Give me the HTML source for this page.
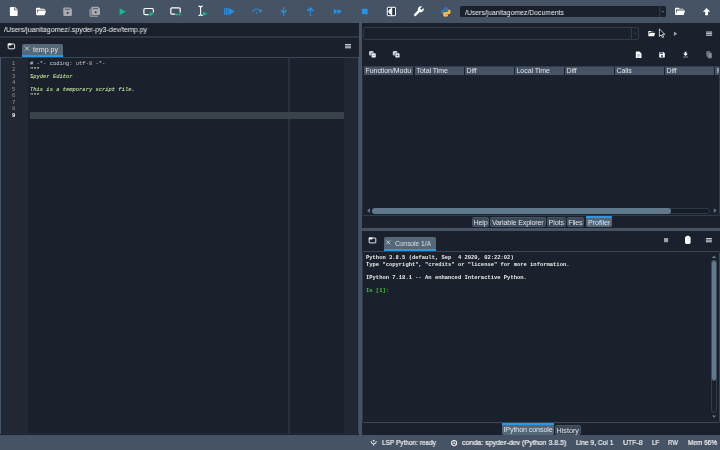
<!DOCTYPE html>
<html><head><meta charset="utf-8">
<style>
*{margin:0;padding:0;box-sizing:border-box}
html,body{width:720px;height:450px;overflow:hidden;background:#1a212c;font-family:"Liberation Sans",sans-serif;color:#E0E1E3}
.a{position:absolute}
svg{position:absolute;overflow:visible}
#tb{left:0;top:0;width:720px;height:23px;background:#455364}
#sb{left:0;top:435px;width:720px;height:15px;background:#455364}
#vs{left:358.9px;top:23px;width:3.1px;height:411.5px;background:#455364}
#hs{left:362px;top:228.4px;width:358px;height:2.8px;background:#455364}
.t{position:absolute;white-space:pre;line-height:1;will-change:transform}
.mono{font-family:"Liberation Mono",monospace}
/* left pane */
#pathline{left:0;top:36.2px;width:358.9px;height:1.5px;background:#2b3745}
#ed{left:0;top:56.8px;width:358.9px;height:376.8px;border:1px solid #3a4756;border-left:1.2px solid #48566a;border-right-color:#414e5f;border-bottom-color:#232d39;background:#1a212c}
#gut{left:1px;top:57.8px;width:27px;height:374.8px;background:#222833}
#scr{left:344px;top:57.8px;width:12.8px;height:374.8px;background:#222833}
#col{left:288.2px;top:57.8px;width:1.7px;height:374.8px;background:#263240}
#cur{left:29.5px;top:112.3px;width:314.5px;height:6.4px;background:#3A424C}
.tab{position:absolute;background:#54687A;border-radius:2px 2px 0 0}
.ul{position:absolute;background:#259AE9}
.code{font-size:5.46px;left:30px;-webkit-text-stroke:0.06px}
.ln{font-size:5.5px;left:11.7px;color:#8f969d}
.cm{color:#b6b6b6}
.st{color:#C0E6A0;font-style:italic}
/* right */
.hd{will-change:transform;position:absolute;top:67.1px;height:7.5px;background:#455364;font-size:7px;line-height:8.2px;letter-spacing:-0.05px;padding-left:1.5px;overflow:hidden;white-space:nowrap;color:#E0E1E3}
.bt{will-change:transform;position:absolute;top:217.2px;height:10.2px;background:#3B4959;border:.5px solid #465466;border-radius:1.5px;font-size:7.2px;line-height:10.8px;text-align:center;color:#E0E1E3;white-space:nowrap}
.st7{transform-origin:0 0;font-size:7.4px;top:439.2px;color:#F2F3F4;-webkit-text-stroke:0.2px #F2F3F4}
</style></head><body>
<div class="a" id="tb"></div>
<div class="a" id="vs"></div>
<div class="a" id="hs"></div>
<div class="a" id="sb"></div>



<div class="a" style="left:460px;top:5.8px;width:205.6px;height:11.6px;border-radius:1.5px;background:#1a212c"></div>
<div class="t" style="left:464.8px;top:8.9px;font-size:7.3px;color:#F0F1F2;transform:scaleX(0.938);transform-origin:0 0">/Users/juanitagomez/Documents</div>
<!-- LEFT PANE -->
<div class="t" style="left:4.4px;top:26.2px;font-size:7.3px;color:#F0F1F2;transform:scaleX(0.961);transform-origin:0 0">/Users/juanitagomez/.spyder-py3-dev/temp.py</div>
<div class="a" id="pathline"></div>
<div class="tab" style="left:22px;top:43.5px;width:41px;height:13.5px"></div>
<div class="ul" style="left:22px;top:54.8px;width:41px;height:2.2px"></div>
<div class="t" style="left:33.1px;top:46.1px;font-size:7px">temp.py</div>
<div class="a" id="ed"></div>
<div class="a" id="gut"></div>
<div class="a" id="scr"></div>
<div class="a" id="col"></div>
<div class="a" id="cur"></div>
<div class="t mono ln" style="top:60.6px">1</div>
<div class="t mono code" style="top:60.6px"><span class="cm"># -*- coding: utf-8 -*-</span></div>
<div class="t mono ln" style="top:67.1px">2</div>
<div class="t mono code" style="top:67.1px"><span class="st" style="font-style:normal">"""</span></div>
<div class="t mono ln" style="top:73.6px">3</div>
<div class="t mono code" style="top:73.6px"><span class="st">Spyder Editor</span></div>
<div class="t mono ln" style="top:80.1px">4</div>
<div class="t mono ln" style="top:86.6px">5</div>
<div class="t mono code" style="top:86.6px"><span class="st">This is a temporary script file.</span></div>
<div class="t mono ln" style="top:93.1px">6</div>
<div class="t mono code" style="top:93.1px"><span class="st" style="font-style:normal">"""</span></div>
<div class="t mono ln" style="top:99.6px">7</div>
<div class="t mono ln" style="top:106.1px">8</div>
<div class="t mono ln" style="top:112.6px;color:#fff;font-weight:bold">9</div>

<!-- RIGHT TOP -->
<div class="a" style="left:362.5px;top:27px;width:276.3px;height:12.8px;border:1px solid #2f3c4a;border-radius:2px;background:#1a212c"></div>
<div class="a" id="tbl" style="left:362px;top:66px;width:357.6px;height:150.4px;border:1px solid #303d4c;border-bottom-width:1.3px;border-left-color:#27313d;border-radius:2px"></div>
<div class="hd" style="left:364px;width:49px">Function/Modu</div>
<div class="hd" style="left:414.5px;width:48.7px">Total Time</div>
<div class="hd" style="left:464.5px;width:48.7px">Diff</div>
<div class="hd" style="left:514.5px;width:48.7px">Local Time</div>
<div class="hd" style="left:564.5px;width:48.7px">Diff</div>
<div class="hd" style="left:614.5px;width:48.7px">Calls</div>
<div class="hd" style="left:664.5px;width:48.7px">Diff</div>
<div class="hd" style="left:714.6px;width:3.8px;padding-left:1.9px">F</div>
<div class="a" style="left:371.5px;top:207.6px;width:338.6px;height:6px;border:1px solid #2c3947;background:#161d27;border-radius:3px"></div>
<div class="a" style="left:371.5px;top:207.6px;width:299.5px;height:6px;background:#60798B;border-radius:3px"></div>

<div class="bt" style="left:471.5px;width:17px;letter-spacing:-0.15px">Help</div>
<div class="bt" style="left:490px;width:55.5px;letter-spacing:-0.18px">Variable Explorer</div>
<div class="bt" style="left:547px;width:18.5px;letter-spacing:-0.12px">Plots</div>
<div class="bt" style="left:567.3px;width:16.7px;letter-spacing:-0.2px">Files</div>
<div class="bt" style="left:586px;width:26.2px;background:#54687A;top:216px;height:11.3px;line-height:12.2px;border-color:#54687A;letter-spacing:-0.05px">Profiler</div>
<div class="ul" style="left:586px;top:215.7px;width:26.2px;height:2.2px;border-radius:1px 1px 0 0"></div>

<!-- CONSOLE -->
<div class="tab" style="left:383.7px;top:237.4px;width:52px;height:13.4px"></div>
<div class="ul" style="left:383.7px;top:248.6px;width:52px;height:2.2px"></div>
<div class="t" style="left:394.7px;top:239.8px;font-size:7.3px;transform:scaleX(0.905);transform-origin:0 0">Console 1/A</div>
<div class="a" style="left:362px;top:250.6px;width:357.6px;height:172px;border:1px solid #3a4757;border-top-width:1.2px;border-left-color:#2e3a48;border-radius:2px"></div>
<div class="a" style="left:711.1px;top:259.8px;width:6px;height:153.2px;border:1px solid #2f3d4b;border-radius:3px"></div>
<div class="a" style="left:711.1px;top:259.8px;width:6px;height:121.4px;background:#60798B;border:.6px solid #3c4c5d;border-radius:3px"></div>
<div class="t mono" style="left:365.8px;top:254.6px;font-size:5.47px;line-height:6.5px;color:#EDEDED;font-weight:bold">Python 3.8.5 (default, Sep  4 2020, 02:22:02)
Type "copyright", "credits" or "license" for more information.

IPython 7.18.1 -- An enhanced Interactive Python.

<span style="color:#33CC33">In [1]:</span></div>

<div class="bt" style="left:501.7px;top:423px;width:52.1px;height:11.7px;line-height:12px;border-color:#54687A;background:#54687A;letter-spacing:-0.14px">IPython console</div>
<div class="ul" style="left:501.7px;top:423px;width:52.1px;height:2.2px"></div>
<div class="bt" style="left:555.3px;top:424.7px;width:25.5px;height:10px;line-height:10.2px">History</div>

<!-- STATUS -->
<div class="t st7" style="left:382px;transform:scaleX(0.877)">LSP Python: ready</div>
<div class="t st7" style="left:462px;transform:scaleX(0.956)">conda: spyder-dev (Python 3.8.5)</div>
<div class="t st7" style="left:576px;transform:scaleX(0.902)">Line 9, Col 1</div>
<div class="t st7" style="left:623px;transform:scaleX(0.941)">UTF-8</div>
<div class="t st7" style="left:651.7px;transform:scaleX(0.840)">LF</div>
<div class="t st7" style="left:667.5px;transform:scaleX(0.812)">RW</div>
<div class="t st7" style="left:688px;transform:scaleX(0.872)">Mem 66%</div>

<svg id="ic" width="720" height="450" viewBox="0 0 720 450" style="left:0;top:0">
<!-- main toolbar -->
<g id="i-new"><path d="M10.7 7h4.3l2.6 2.6v5.6a.8.8 0 0 1-.8.8h-6.1a.8.8 0 0 1-.8-.8v-7.4a.8.8 0 0 1 .8-.8z" fill="#fff"/><path d="M14.7 7.5v2.4h2.4" stroke="#3d4957" stroke-width=".8" fill="none"/></g>
<path id="i-open" transform="translate(35.06,6.0) scale(0.472,0.46)" fill="#fff" d="M19,20H4C2.89,20 2,19.1 2,18V6C2,4.89 2.89,4 4,4H10L12,6H19A2,2 0 0,1 21,8H21L4,8V18L6.14,10H23.21L20.93,18.5C20.7,19.37 19.92,20 19,20Z"/>
<g id="i-save"><path d="M64.1 7.4h5.9l1.9 1.9v5.8a.8.8 0 0 1-.8.8h-7a.8.8 0 0 1-.8-.8v-6.9a.8.8 0 0 1 .8-.8z" fill="#A9AAAC"/><path d="M64.9 9.3h5" stroke="#4a5562" stroke-width=".9"/><circle cx="67.6" cy="12.9" r="1" fill="#2f3844"/></g>
<g id="i-saveall"><path d="M90.1 8.7v7.5h7.7" stroke="#A9AAAC" stroke-width="1" fill="none"/><path d="M92.2 6.8h5.9l1.9 1.9v5.6a.8.8 0 0 1-.8.8h-7a.8.8 0 0 1-.8-.8v-6.7a.8.8 0 0 1 .8-.8z" fill="#A9AAAC"/><path d="M93.1 8.7h4.9" stroke="#4a5562" stroke-width=".9"/><circle cx="95.7" cy="12.2" r="1" fill="#2f3844"/></g>
<path id="i-run" d="M119.6 8.3L125.8 11.65L119.6 15z" fill="#12BE8C"/>
<g id="i-cell"><rect x="143.9" y="8.5" width="9.5" height="6.1" rx="1.2" fill="none" stroke="#fff" stroke-width="1.2"/><rect x="148.6" y="12.6" width="6" height="4" fill="#455364"/><path d="M149.6 12L153.8 14.1L149.6 16.25z" fill="#12BE8C"/></g>
<g id="i-celladv"><rect x="170.8" y="7.9" width="9.4" height="6.3" rx="1.2" fill="none" stroke="#fff" stroke-width="1.2"/><rect x="175.2" y="12.6" width="7" height="3.6" fill="#455364"/><path d="M175.8 13.2L178.8 14.5L175.8 15.8zM178.8 13.2L181.8 14.5L178.8 15.8z" fill="#12BE8C"/></g>
<g id="i-sel"><path d="M198.4 6.1q2.2 0 2.2 1.6v6.2q0 1.6-2.2 1.6M202.8 6.1q-2.2 0-2.2 1.6M202.8 15.5q-2.2 0-2.2-1.6" stroke="#fff" stroke-width="1.05" fill="none"/><path d="M202.8 11.7L207.5 13.75L202.8 15.8z" fill="#12BE8C"/></g>
<g id="i-debug" fill="#2B8FE0"><rect x="224.2" y="7.9" width="1.1" height="7.1"/><rect x="225.9" y="7.9" width="1.1" height="7.1"/><rect x="227.6" y="7.9" width="1.1" height="7.1"/><path d="M229.2 7.9L234.6 11.45L229.2 15z"/></g>
<g id="i-over" fill="none" stroke="#2B8FE0"><path d="M252.6 12.2A4.3 4.3 0 0 1 260.4 11" stroke-width="1.05"/><path d="M258.4 12L261.9 12.6L261.8 9z" fill="#2B8FE0" stroke="none"/><circle cx="256.5" cy="13.1" r=".8" fill="#2B8FE0" stroke="none"/></g>
<g id="i-into" stroke="#2B8FE0" fill="none"><path d="M283.7 6.9v6" stroke-width="1"/><path d="M281 10.2L283.7 12.9L286.4 10.2" stroke-width="1.5"/><circle cx="283.7" cy="15.1" r=".85" fill="#2B8FE0" stroke="none"/></g>
<g id="i-out" stroke="#2B8FE0" fill="none"><path d="M310.4 8v5.6" stroke-width="1"/><path d="M307.5 11L310.4 8.1L313.3 11" stroke-width="1.5"/><circle cx="310.4" cy="15.1" r=".85" fill="#2B8FE0" stroke="none"/></g>
<path id="i-cont" d="M333.8 8.75L338 11.5L333.8 14.2zM337.8 8.75L342 11.5L337.8 14.2z" fill="#2B8FE0"/>
<rect id="i-stop" x="361.8" y="8.75" width="5.9" height="5.5" fill="#2B8FE0"/>
<g id="i-max"><rect x="387.3" y="7.3" width="8.2" height="8.4" rx=".5" fill="#25324a" stroke="#fff" stroke-width="1"/><path d="M391.8 7.9Q388.9 8.8 388.1 11.5Q388.9 14.2 391.8 15.1z" fill="#fff"/><rect x="391.2" y="7.6" width="1" height="7.8" fill="#fff"/></g>
<path id="i-wrench" transform="translate(424.2,5.8) scale(-0.455,0.455)" fill="#fff" d="M22.7,19L13.6,9.9C14.5,7.6 14,4.9 12.1,3C10.1,1 7.1,0.6 4.7,1.7L9,6L6,9L1.6,4.7C0.4,7.1 0.9,10.1 2.9,12.1C4.8,14 7.5,14.5 9.8,13.6L18.9,22.7C19.3,23.1 19.9,23.1 20.3,22.7L22.6,20.4C23.1,20 23.1,19.3 22.7,19Z"/>
<circle cx="445.7" cy="12" r="5.2" fill="#364252" opacity=".55"/><g id="i-py" transform="translate(440.6,7.1) scale(0.09,0.086)"><path fill="#3A74A6" d="M 54.918785,9.1927421e-4 C 50.335132,0.02221727 45.957846,0.41313697 42.106285,1.0946693 30.760069,3.0991731 28.700036,7.2947714 28.700035,15.032169 L 28.700035,25.250919 L 55.512535,25.250919 L 55.512535,28.657169 L 28.700035,28.657169 L 18.637535,28.657169 C 10.845076,28.657169 4.0217762,33.340886 1.8875352,42.250919 C -0.57428478,52.463885 -0.68347478,58.836942 1.8875352,69.500919 C 3.7934552,77.438771 8.3450752,83.094667 16.137535,83.094669 L 25.356285,83.094669 L 25.356285,70.844669 C 25.356285,61.994767 33.013429,54.188421 42.106285,54.188419 L 68.887535,54.188419 C 76.342486,54.188419 82.293785,48.050226 82.293785,40.563419 L 82.293785,15.032169 C 82.293785,7.7658331 76.163805,2.3073592 68.887535,1.0946693 C 64.281548,0.32794397 59.502438,-0.02037903 54.918785,9.1927421e-4 z"/><path fill="#F8BC3C" d="M 85.637535,28.657169 L 85.637535,40.563419 C 85.637535,49.793979 77.811865,57.563418 68.887535,57.563419 L 42.106285,57.563419 C 34.770407,57.563419 28.700035,63.841935 28.700035,71.188419 L 28.700035,96.719669 C 28.700035,103.98601 35.018595,108.25992 42.106285,110.34467 C 50.593625,112.84029 58.732635,113.29129 68.887535,110.34467 C 75.637785,108.3903 82.293785,104.45709 82.293785,96.719669 L 82.293785,86.500919 L 55.512535,86.500919 L 55.512535,83.094669 L 82.293785,83.094669 L 95.700035,83.094669 C 103.49249,83.094669 106.39629,77.659279 109.10629,69.500919 C 111.90562,61.101955 111.78649,53.024955 109.10629,42.250919 C 107.18047,34.493346 103.50231,28.657169 95.700035,28.657169 L 85.637535,28.657169 z"/></g>
<path id="i-open2" transform="translate(674.06,5.9) scale(0.472,0.46)" fill="#fff" d="M19,20H4C2.89,20 2,19.1 2,18V6C2,4.89 2.89,4 4,4H10L12,6H19A2,2 0 0,1 21,8H21L4,8V18L6.14,10H23.21L20.93,18.5C20.7,19.37 19.92,20 19,20Z"/>
<path id="i-up" transform="translate(700.94,6.23) scale(0.47,0.45)" fill="#fff" d="M15,20H9V12H4.16L12,4.16L19.84,12H15V20Z"/>

<!-- toolbar combo -->
<g id="combo1"><path d="M659.8 6.3v10.6" stroke="#3a4756" stroke-width=".8"/><path d="M661.5 10.9l1.3 1.3l1.3-1.3" stroke="#9aa4ae" stroke-width=".6" fill="none"/></g>
<!-- editor tab bar icons -->
<g id="i-tabs1"><rect x="8.2" y="44" width="6.4" height="4.8" rx=".6" fill="none" stroke="#fff" stroke-width=".9"/><rect x="7.8" y="43.5" width="3.6" height="1.9" fill="#fff"/></g>
<path id="i-x1" d="M25 46.6l3.8 3.8M28.8 46.6l-3.8 3.8" stroke="#E6E7E9" stroke-width=".8"/>
<g id="i-ham1" fill="#c6c9cc"><rect x="345" y="44" width="6" height="1.1"/><rect x="345" y="45.6" width="6" height="1.1"/><rect x="345" y="47.2" width="6" height="1.1"/></g>
<!-- profiler top row -->
<path d="M631.4 28v11.2" stroke="#3a4756" stroke-width=".8"/><path d="M634.2 32.7l1.1 1.1l1.1-1.1" stroke="#77818c" stroke-width=".55" fill="none"/>
<path id="i-open3" transform="translate(647.6,29.7) scale(0.32,0.325)" fill="#fff" d="M19,20H4C2.89,20 2,19.1 2,18V6C2,4.89 2.89,4 4,4H10L12,6H19A2,2 0 0,1 21,8H21L4,8V18L6.14,10H23.21L20.93,18.5C20.7,19.37 19.92,20 19,20Z"/>
<path id="i-play2" d="M673.9 31.4L677.3 33.65L673.9 35.9z" fill="#9A9FA5"/>
<g id="i-ham2" fill="#c6c9cc"><rect x="706.1" y="31.5" width="6" height="1.1"/><rect x="706.1" y="33.1" width="6" height="1.1"/><rect x="706.1" y="34.7" width="6" height="1.1"/></g>
<!-- mouse cursor -->
<path id="cursor" d="M659.4 28.9v7.6l1.8-1.6l1.3 2.7l1.2-.55l-1.3-2.65h2.4z" fill="#14181d" stroke="#f0f0f0" stroke-width=".8" stroke-linejoin="round"/>
<!-- profiler second row -->
<g id="i-col1"><rect x="369" y="50.9" width="4.6" height="4.6" rx="1.3" fill="#c9cdd5"/><rect x="371.3" y="53.1" width="4.7" height="4.7" rx="1.3" fill="#f4f5f7" stroke="#1a212c" stroke-width=".5"/><path d="M372.6 55.45h2.1" stroke="#5a6572" stroke-width=".55"/></g>
<g id="i-col2"><rect x="392.8" y="50.9" width="4.6" height="4.6" rx="1.3" fill="#c9cdd5"/><rect x="395.1" y="53.1" width="4.7" height="4.7" rx="1.3" fill="#f4f5f7" stroke="#1a212c" stroke-width=".5"/><path d="M396.4 55.45h2.1M397.45 54.4v2.1" stroke="#3a4552" stroke-width=".6"/></g>
<g id="i-file2"><path d="M636.4 51.4h3l2.1 2.1v4a.6.6 0 0 1-.6.6h-4.5a.6.6 0 0 1-.6-.6v-5.5a.6.6 0 0 1 .6-.6z" fill="#fff"/><path d="M637 54.6h3.3M637 55.8h3.3M637 57h2.3" stroke="#7a8490" stroke-width=".5"/></g>
<path id="i-save2" transform="translate(658.3,51) scale(0.31)" fill="#fff" d="M15,9H5V5H15M12,19A3,3 0 0,1 9,16A3,3 0 0,1 12,13A3,3 0 0,1 15,16A3,3 0 0,1 12,19M17,3H5C3.89,3 3,3.9 3,5V19A2,2 0 0,0 5,21H19A2,2 0 0,0 21,19V7L17,3Z"/>
<path id="i-dl" transform="translate(681.6,50.7) scale(0.33)" fill="#fff" d="M5,20H19V18H5M19,9H15V3H9V9H5L12,16L19,9Z"/>
<g id="i-copy" fill="#838c97"><rect x="706.4" y="51.3" width="4" height="5.6" rx=".8"/><rect x="707.8" y="52.6" width="4.2" height="5.8" rx=".8" stroke="#1a212c" stroke-width=".4"/></g>
<!-- profiler hscroll arrows -->
<path d="M370 208.2L367.1 210.6L370 213z" fill="#60798B"/><path d="M713.8 208.2L716.7 210.6L713.8 213z" fill="#60798B"/>
<!-- console tab bar -->
<g id="i-tabs2"><rect x="369.2" y="238" width="6.6" height="4.9" rx=".6" fill="none" stroke="#fff" stroke-width=".9"/><rect x="368.8" y="237.5" width="3.6" height="1.9" fill="#fff"/></g>
<path id="i-x2" d="M386.4 240.4l3.8 3.8M390.2 240.4l-3.8 3.8" stroke="#E6E7E9" stroke-width=".8"/>
<rect id="i-stop2" x="664" y="238" width="4.2" height="4.2" fill="#9A9FA5"/>
<g id="i-clip"><rect x="685" y="236.4" width="5.6" height="7.6" rx="1.4" fill="#fff"/><rect x="686.4" y="235.8" width="2.8" height="1.6" rx=".6" fill="#fff"/><path d="M688.6 238.6h1.4M688.6 240.2h1.4" stroke="#a8b0b8" stroke-width=".5"/></g>
<g id="i-ham3" fill="#c6c9cc"><rect x="705.9" y="238" width="6" height="1.1"/><rect x="705.9" y="239.6" width="6" height="1.1"/><rect x="705.9" y="241.2" width="6" height="1.1"/></g>
<!-- console vscroll arrows -->
<path d="M711.8 257.9L714.1 255.6L716.4 257.9z" fill="#60798B"/><path d="M711.8 415.5L714.1 417.8L716.4 415.5z" fill="#60798B"/>
<!-- status icons -->
<g id="i-lsp" fill="none" stroke="#F0F1F2" stroke-width="1"><path d="M371.1 441.2a2.6 2.7 0 0 0 5.2 0"/><circle cx="373.7" cy="440.7" r=".85" fill="#F0F1F2" stroke="none"/><path d="M373.7 443.9v1.7"/></g>
<g id="i-env"><circle cx="454.1" cy="443.1" r="2.6" fill="none" stroke="#E6E7E9" stroke-width="1.1"/><circle cx="454.1" cy="443.1" r=".9" fill="#E6E7E9"/><path d="M454.1 440.4v2M451.8 444.5l1.7-1M456.4 444.5l-1.7-1" stroke="#E6E7E9" stroke-width=".7"/></g>
</svg>
</body></html>
